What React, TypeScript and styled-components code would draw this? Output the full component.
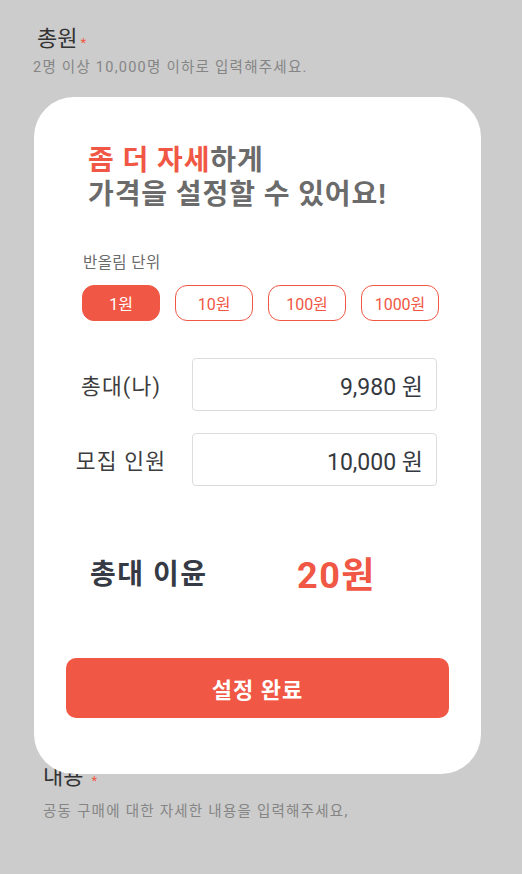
import React from "react";
import styled, { createGlobalStyle } from "styled-components";

const RED = "#f05744";

const Global = createGlobalStyle`
  html, body { margin: 0; padding: 0; }
  body {
    font-family: "Roboto", "Noto Sans CJK KR", "Noto Sans", sans-serif;
    background: #cccccc;
  }
  * { box-sizing: border-box; }
`;

const Page = styled.div`
  position: relative;
  width: 522px;
  height: 874px;
  overflow: hidden;
  background: #cccccc;
  padding: 24px 0 0 0;
`;

const Field = styled.section<{ $left: number; $top: number }>`
  display: flex;
  flex-direction: column;
  padding-left: ${(p) => p.$left}px;
  margin-top: ${(p) => p.$top}px;
`;

const FieldTitle = styled.div<{ $indent: number; $gap: number }>`
  display: flex;
  align-items: flex-end;
  gap: ${(p) => p.$gap}px;
  padding-left: ${(p) => p.$indent}px;
  font-size: 22px;
  line-height: 30px;
  color: #333;
`;

const Star = styled.span`
  color: ${RED};
  font-size: 13px;
  line-height: 22px;
`;

const FieldHint = styled.div<{ $top: number }>`
  margin-top: ${(p) => p.$top}px;
  font-size: 14.5px;
  letter-spacing: 1.25px;
  line-height: 20px;
  color: #858585;
`;

const Modal = styled.div`
  position: absolute;
  left: 34px;
  top: 97px;
  width: 447px;
  height: 677px;
  background: #fff;
  border-radius: 40px;
  display: flex;
  flex-direction: column;
  padding: 47px 32px 0 32px;
`;

const Title = styled.h2`
  margin: 0 0 0 22px;
  font-size: 28px;
  letter-spacing: 0.9px;
  line-height: 34px;
  font-weight: 700;
  color: #6b6b6b;
`;

const Red = styled.span`
  color: ${RED};
`;

const SectionLabel = styled.div`
  margin: 41px 0 0 17px;
  font-size: 15.5px;
  letter-spacing: 0.4px;
  line-height: 20px;
  color: #6a6a6a;
`;

const Chips = styled.div`
  display: flex;
  gap: 15px;
  margin: 12px 0 0 16px;
`;

const Chip = styled.button<{ $active?: boolean }>`
  width: 78px;
  height: 36px;
  border-radius: 12px;
  border: 1.5px solid ${RED};
  background: ${(p) => (p.$active ? RED : "#fff")};
  color: ${(p) => (p.$active ? "#fff" : RED)};
  font-family: inherit;
  font-size: 16px;
  padding: 0;
  display: flex;
  align-items: center;
  justify-content: center;
`;

const Rows = styled.div`
  display: flex;
  flex-direction: column;
  gap: 22px;
  margin-top: 37px;
`;

const Row = styled.div`
  display: flex;
  align-items: center;
  gap: 16px;
`;

const RowLabel = styled.div`
  width: 110px;
  text-align: center;
  font-size: 21.5px;
  letter-spacing: 1.2px;
  color: #3d3d3d;
`;

const Box = styled.div`
  width: 245px;
  height: 53px;
  border: 1px solid #dcdcdc;
  border-radius: 4px;
  display: flex;
  align-items: center;
  justify-content: flex-end;
  padding-right: 13px;
  font-size: 23px;
  color: #35393f;
`;

const Profit = styled.div`
  display: flex;
  align-items: center;
  margin: 60px 0 0 24px;
`;

const ProfitLabel = styled.div`
  width: 207px;
  font-size: 28px;
  letter-spacing: 1.5px;
  font-weight: 700;
  color: #353a44;
`;

const ProfitValue = styled.div`
  font-size: 36px;
  letter-spacing: 1.5px;
  font-weight: 700;
  color: ${RED};
`;

const Submit = styled.button`
  margin-top: 60px;
  height: 60px;
  width: 383px;
  border: none;
  border-radius: 10px;
  background: ${RED};
  color: #fff;
  font-family: inherit;
  font-size: 22px;
  letter-spacing: 1px;
  font-weight: 700;
`;

export default function App() {
  return (
    <Page>
      <Global />
      <Field $left={33} $top={0}>
        <FieldTitle $indent={4} $gap={3}>
          총원<Star>*</Star>
        </FieldTitle>
        <FieldHint $top={4}>2명 이상 10,000명 이하로 입력해주세요.</FieldHint>
      </Field>
      <Field $left={43} $top={684}>
        <FieldTitle $indent={0} $gap={8}>
          내용<Star>*</Star>
        </FieldTitle>
        <FieldHint $top={10}>공동 구매에 대한 자세한 내용을 입력해주세요,</FieldHint>
      </Field>

      <Modal>
        <Title>
          <Red>좀 더 자세</Red>하게
          <br />
          가격을 설정할 수 있어요!
        </Title>
        <SectionLabel>반올림 단위</SectionLabel>
        <Chips>
          <Chip $active>1원</Chip>
          <Chip>10원</Chip>
          <Chip>100원</Chip>
          <Chip>1000원</Chip>
        </Chips>
        <Rows>
          <Row>
            <RowLabel>총대(나)</RowLabel>
            <Box>9,980 원</Box>
          </Row>
          <Row>
            <RowLabel>모집 인원</RowLabel>
            <Box>10,000 원</Box>
          </Row>
        </Rows>
        <Profit>
          <ProfitLabel>총대 이윤</ProfitLabel>
          <ProfitValue>20원</ProfitValue>
        </Profit>
        <Submit>설정 완료</Submit>
      </Modal>
    </Page>
  );
}
